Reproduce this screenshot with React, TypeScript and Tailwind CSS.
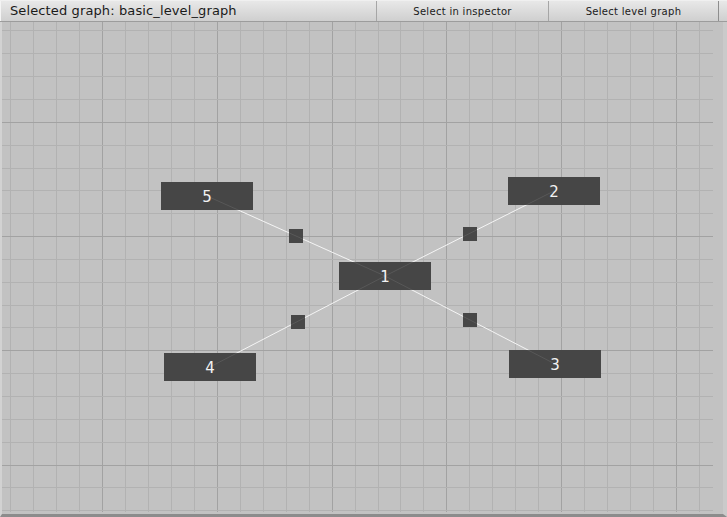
import React from 'react'

// node boxes in canvas coordinates (canvas starts 22px below the page top)
const nodes = [
  { id: '1', x: 339, y: 240 },
  { id: '2', x: 508, y: 155 },
  { id: '3', x: 509, y: 328 },
  { id: '4', x: 164, y: 331 },
  { id: '5', x: 161, y: 160 },
]

const edges: [string, string][] = [
  ['5', '1'],
  ['1', '2'],
  ['4', '1'],
  ['1', '3'],
]

const NODE_W = 92
const NODE_H = 28

const center = (id: string) => {
  const n = nodes.find(n => n.id === id)!
  return { x: n.x + NODE_W / 2, y: n.y + NODE_H / 2 }
}

function Grid() {
  const vs: { x: number; major: boolean }[] = []
  for (let k = 0; ; k++) {
    const x = 10.16 + 22.96 * k
    if (x > 712) break
    vs.push({ x: Math.round(x) + 0.5, major: k % 5 === 4 })
  }
  const hs: { y: number; major: boolean }[] = []
  for (let k = 0; ; k++) {
    const y = 30.4 + 22.85 * k - 22
    if (y > 490) break
    hs.push({ y: Math.round(y) + 0.5, major: k % 5 === 4 })
  }
  return (
    <g>
      {vs.map((v, i) => (
        <line key={'v' + i} x1={v.x} y1={0} x2={v.x} y2={490} stroke={v.major ? '#a2a2a2' : '#b2b2b2'} strokeWidth={1} />
      ))}
      {hs.map((h, i) => (
        <line key={'h' + i} x1={2} y1={h.y} x2={713} y2={h.y} stroke={h.major ? '#a2a2a2' : '#b2b2b2'} strokeWidth={1} />
      ))}
    </g>
  )
}

function EdgeLines({ faint }: { faint?: boolean }) {
  return (
    <g>
      {edges.map(([a, b]) => {
        const p = center(a)
        const q = center(b)
        return (
          <line
            key={a + b}
            x1={p.x}
            y1={p.y}
            x2={q.x}
            y2={q.y}
            stroke="#f4f4f4"
            strokeOpacity={faint ? 0.1 : 1}
            strokeWidth={1}
          />
        )
      })}
    </g>
  )
}

export default function App() {
  return (
    <div className="w-[727px] h-[517px] flex flex-col bg-[#c2c2c2] overflow-hidden" style={{ fontFamily: '"DejaVu Sans", sans-serif' }}>
      {/* toolbar */}
      <div className="h-[22px] flex items-stretch bg-gradient-to-b from-[#e8e8e8] to-[#cfcfcf] border-b border-[#9c9c9c] border-t border-t-[#f0f0f0]">
        <div className="flex-1 flex items-center pl-[9px] text-[13px] tracking-[0.12px] text-[#1a1a1a] border-l border-l-[#f4f4f4]">
          Selected graph: basic_level_graph
        </div>
        <button className="w-[172px] border-l border-[#a6a6a6] flex items-center justify-center text-[10px] tracking-[0.3px] text-[#1a1a1a]">
          Select in inspector
        </button>
        <button className="w-[170px] border-l border-[#a6a6a6] flex items-center justify-center text-[10px] tracking-[0.3px] text-[#1a1a1a]">
          Select level graph
        </button>
        <div className="w-[9px] border-l border-[#8e8e8e]" />
      </div>

      {/* canvas */}
      <div className="relative flex-1 border-l-2 border-l-[#d2d2d2] border-b-[3px] border-b-[#8c8c8c] border-r-[4px] border-r-[#cacaca]">
        <svg className="absolute left-[-2px] top-0" width={727} height={495}>
          <Grid />
          <EdgeLines />
          {edges.map(([a, b]) => {
            const p = center(a)
            const q = center(b)
            const mx = Math.round((p.x + q.x) / 2)
            const my = Math.round((p.y + q.y) / 2)
            return <rect key={'m' + a + b} x={mx - 7} y={my - 7} width={14} height={14} fill="#474747" />
          })}
        </svg>

        {nodes.map(n => (
          <div
            key={n.id}
            className="absolute w-[92px] h-[28px] pt-[2px] bg-[#464646] flex items-center justify-center text-[15px] text-[#f2f2f2]"
            style={{ left: n.x - 2, top: n.y }}
          >
            {n.id}
          </div>
        ))}

        <svg className="absolute left-[-2px] top-0 pointer-events-none" width={727} height={495}>
          <EdgeLines faint />
        </svg>
      </div>
    </div>
  )
}
